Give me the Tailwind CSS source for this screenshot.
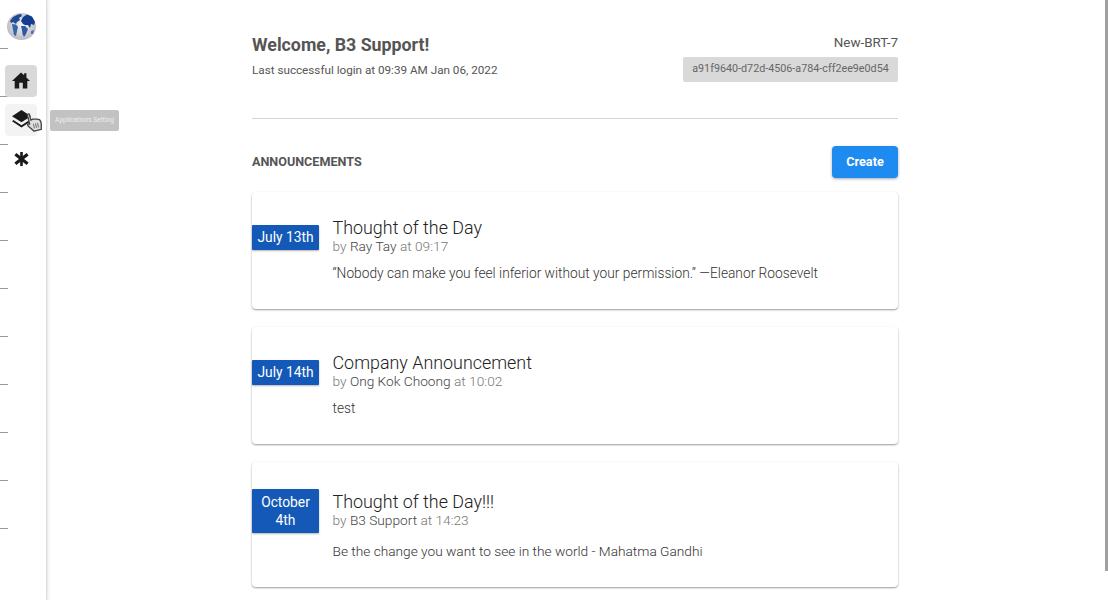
<!DOCTYPE html>
<html lang="en">
<head>
<meta charset="utf-8">
<title>Dashboard</title>
<script src="https://cdn.jsdelivr.net/npm/@tailwindcss/browser@4"></script>
</head>
<body class="bg-white overflow-hidden font-['Roboto',sans-serif] text-[#555]">
<div class="relative flex h-[600px] w-[1108px] overflow-hidden">
  <!-- sidebar -->
  <aside class="relative w-[47px] h-full shrink-0 bg-white border-r border-[#ddd] shadow-[1px_0_3px_rgba(0,0,0,0.12)]">
    <div class="absolute left-0 top-[1px] w-2 flex flex-col">
      <div class="h-12 border-b border-[#999] box-border"></div>
      <div class="h-12 border-b border-[#999] box-border"></div>
      <div class="h-12 border-b border-[#999] box-border"></div>
      <div class="h-12 border-b border-[#999] box-border"></div>
      <div class="h-12 border-b border-[#999] box-border"></div>
      <div class="h-12 border-b border-[#999] box-border"></div>
      <div class="h-12 border-b border-[#999] box-border"></div>
      <div class="h-12 border-b border-[#999] box-border"></div>
      <div class="h-12 border-b border-[#999] box-border"></div>
      <div class="h-12 border-b border-[#999] box-border"></div>
      <div class="h-12 border-b border-[#999] box-border"></div>
    </div>
    <div class="relative flex flex-col items-start pl-[5px]">
      <svg class="mt-[13px] ml-[2px] w-[29px] h-[27px]" viewBox="0 0 29 27">
        <defs><radialGradient id="g" cx="50%" cy="45%" r="60%"><stop offset="0%" stop-color="#f4f4f6"/><stop offset="100%" stop-color="#b4b4bc"/></radialGradient></defs>
        <ellipse cx="14.5" cy="13.5" rx="14.5" ry="13.5" fill="url(#g)"/>
        <path d="M3 8 L6 4 L11 1.500 L14 1 L15 3 L12 5 L13 7 L10 9 L9 11 L6 9 L4 10Z" fill="#1f4a96"/>
        <path d="M5 11 L9 11.500 L11 14 L10 18 L9 23 L7 22 L6 17Z" fill="#3465ab"/>
        <path d="M14 8 L16 4 L20 1.500 L25 3.500 L28 9 L27 12 L24 11 L23 15 L21 12 L18 12 L16 11Z" fill="#143c90"/>
        <path d="M14 13 L18 13 L21 16 L19 21 L17 24 L15.500 21 L15 17Z" fill="#2a5aa6"/>
        <path d="M24 18 L27 17 L26 21 L24 21Z" fill="#4a72b4"/>
      </svg>
      <div class="mt-[25px] flex h-8 w-8 items-center justify-center rounded-[4px] bg-[#d9d9d9]">
        <svg class="w-[18px] h-[17px] -translate-y-[1px]" viewBox="0 0 20 18"><path d="M10 0 L13.500 3.300 L13.500 1 L16 1 L16 5.700 L20 9.500 L17 9.500 L17 18 L12 18 L12 11.500 L8 11.500 L8 18 L3 18 L3 9.500 L0 9.500Z" fill="#1a1a1a"/></svg>
      </div>
      <div class="mt-[7px] flex h-8 w-8 items-center justify-center rounded-[4px] bg-[#f3f3f4]">
        <svg class="w-[19px] h-[18px] -translate-y-[1px]" viewBox="0 0 20 19"><path d="M10 0 L20 6.500 L10 13 L0 6.500Z" fill="#1a1a1a"/><path d="M1.500 10.500 L10 16 L18.500 10.500 L20 12 L10 18.500 L0 12Z" fill="#1a1a1a"/></svg>
      </div>
      <div class="mt-[7px] flex h-8 w-8 items-center justify-center">
        <svg class="w-[15px] h-[14px]" viewBox="0 0 16 16"><g stroke="#1a1a1a"><path d="M8 0 V16" stroke-width="3"/><path d="M1 2.500 L15 13.500" stroke-width="3.600"/><path d="M15 2.500 L1 13.500" stroke-width="3.600"/></g></svg>
      </div>
    </div>
    <!-- pointer cursor -->
    <svg class="absolute left-[26px] top-[112px] w-[16px] h-[20px] -rotate-[14deg]" viewBox="0 0 15 19"><path d="M3 1.500 C3 0.500 5 0.500 5 1.500 L5 7 L7 6.500 L9 7 L11 7.500 L13 8.500 C14 9.500 14 12 13.500 14 L12.500 18 L5.500 18 L1 11.500 C0.500 10 2 9.500 3 10.500 L3 1.500Z" fill="#ddd" stroke="#444" stroke-width="1.300" stroke-linejoin="round"/><path d="M6.500 11 V15.500 M8.500 11 V15.500 M10.500 11 V15.500" stroke="#777" stroke-width="1"/></svg>
  </aside>
  <!-- tooltip -->
  <div class="absolute left-[50px] top-[110px] flex h-[21px] w-[69px] items-center justify-center rounded-[2px] bg-[#c2c2c2] text-[6.600px] text-[#eee] whitespace-nowrap">Applications Setting</div>

  <!-- main -->
  <main class="ml-[205px] w-[646px] shrink-0">
    <header class="flex justify-between pt-[33px] h-[119px] border-b border-[#d6d6d6] box-border">
      <div>
        <h1 class="text-[17.800px] leading-[24px] font-bold text-[#555]">Welcome, B3 Support!</h1>
        <p class="mt-[4px] text-[11.700px] leading-[18px] text-[#555]">Last successful login at 09:39 AM Jan 06, 2022</p>
      </div>
      <div class="flex flex-col items-end">
        <div class="text-[13.400px] leading-[20px] text-[#555]">New-BRT-7</div>
        <div class="mt-[4px] flex h-[25px] w-[215px] items-center justify-center rounded-[2px] bg-[#d9d9d9] text-[10.750px] text-[#666]">a91f9640-d72d-4506-a784-cff2ee9e0d54</div>
      </div>
    </header>
    <div class="mt-[27px] flex items-center justify-between">
      <h2 class="text-[12.600px] font-bold text-[#555]">ANNOUNCEMENTS</h2>
      <button class="h-8 w-[66px] rounded-[4px] bg-[#1e8bf0] text-[12.700px] font-bold text-white shadow-[0_1px_3px_rgba(0,0,0,0.35)]">Create</button>
    </div>
    <div class="mt-[14px] flex flex-col gap-[18px]">
      <article class="flex h-[117px] items-start rounded-[4px] bg-white shadow-[0_1px_2px_rgba(0,0,0,0.4)]">
        <div class="mt-[33px] flex h-[25px] w-[67px] shrink-0 items-center justify-center rounded-[1px] bg-[#1459b7] pb-[1px] text-center text-[13.800px] leading-[18px] text-white shadow-[0_1px_2px_rgba(0,0,0,0.3)]">July 13th</div>
        <div class="ml-[13.500px] pt-[25px]">
          <h3 class="text-[17.900px] leading-[21px] font-light text-[#222]">Thought of the Day</h3>
          <p class="text-[13.700px] leading-[16px] font-light text-[#777]">by <span class="text-[#444]">Ray Tay</span> at 09:17</p>
          <p class="mt-[9px] text-[13.750px] leading-[20px] font-light text-[#333]">“Nobody can make you feel inferior without your permission.” —Eleanor Roosevelt</p>
        </div>
      </article>
      <article class="flex h-[117px] items-start rounded-[4px] bg-white shadow-[0_1px_2px_rgba(0,0,0,0.4)]">
        <div class="mt-[33px] flex h-[25px] w-[67px] shrink-0 items-center justify-center rounded-[1px] bg-[#1459b7] pb-[1px] text-center text-[13.800px] leading-[18px] text-white shadow-[0_1px_2px_rgba(0,0,0,0.3)]">July 14th</div>
        <div class="ml-[13.500px] pt-[25px]">
          <h3 class="text-[17.900px] leading-[21px] font-light text-[#222]">Company Announcement</h3>
          <p class="text-[13.700px] leading-[16px] font-light text-[#777]">by <span class="text-[#444]">Ong Kok Choong</span> at 10:02</p>
          <p class="mt-[9px] text-[13.750px] leading-[20px] font-light text-[#333]">test</p>
        </div>
      </article>
      <article class="flex h-[125px] items-start rounded-[4px] bg-white shadow-[0_1px_2px_rgba(0,0,0,0.4)]">
        <div class="mt-[27px] flex h-[44px] w-[67px] shrink-0 items-center justify-center rounded-[1px] bg-[#1459b7] text-center text-[13.800px] leading-[18px] text-white shadow-[0_1px_2px_rgba(0,0,0,0.3)]">October<br>4th</div>
        <div class="ml-[13.500px] pt-[29px]">
          <h3 class="text-[17.900px] leading-[21px] font-light text-[#222]">Thought of the Day!!!</h3>
          <p class="text-[13.700px] leading-[16px] font-light text-[#777]">by <span class="text-[#444]">B3 Support</span> at 14:23</p>
          <p class="mt-[13px] text-[13.700px] leading-[20px] font-light text-[#333]">Be the change you want to see in the world - Mahatma Gandhi</p>
        </div>
      </article>
    </div>
  </main>
  <!-- scrollbar thumb -->
  <div class="absolute right-0 top-0 h-[571px] w-[3px] bg-[#a0a0a0]"></div>
</div>
</body>
</html>
